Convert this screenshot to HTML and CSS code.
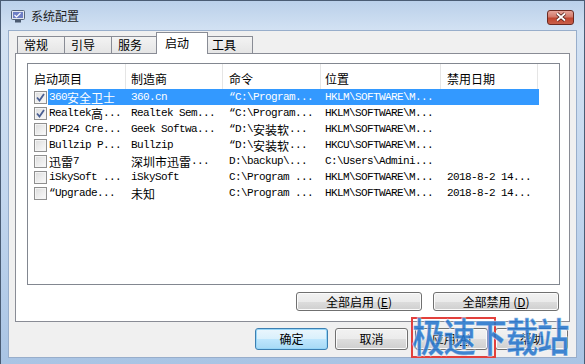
FILE: index.html
```html
<!DOCTYPE html>
<html lang="zh-CN">
<head>
    <meta charset="UTF-8">
    <title>系统配置</title>
    <link rel="stylesheet" href="styles.css">
</head>
<body>

    <div class="window">

        <!-- Title bar -->
        <div class="titlebar">
            <svg class="app-icon" width="14" height="13" viewBox="0 0 14 13">
                <rect x="0.5" y="0.5" width="13" height="9" rx="1" fill="#e3e8f0" stroke="#56667c"/>
                <rect x="2" y="2" width="10" height="6" fill="#6f7fc4"/>
                <path d="M3.5 5 L5.5 7 L9.5 3" stroke="#ffffff" stroke-width="1.2" fill="none"/>
                <rect x="4" y="10" width="6" height="2.5" fill="#4b5a70"/>
            </svg>
            <span class="title">系统配置</span>
            <div class="close-btn">
                <svg width="12" height="10" viewBox="0 0 12 10">
                    <path d="M2 1.5 L10 8.5 M10 1.5 L2 8.5" stroke="#4a1a14" stroke-width="3.4"/>
                    <path d="M2 1.5 L10 8.5 M10 1.5 L2 8.5" stroke="#ffffff" stroke-width="1.8"/>
                </svg>
            </div>
        </div>

        <!-- Dialog client area -->
        <div class="client">
            <div class="tabs">
                <div class="tab">常规</div>
                <div class="tab">引导</div>
                <div class="tab">服务</div>
                <div class="tab active">启动</div>
                <div class="tab">工具</div>
            </div>

            <div class="page">
                <div class="list">
                    <div class="row head">
                        <div class="c c1">启动项目</div>
                        <div class="c c2">制造商</div>
                        <div class="c c3">命令</div>
                        <div class="c c4">位置</div>
                        <div class="c c5">禁用日期</div>
                        <div class="c c6"></div>
                    </div>

                    <div class="row sel">
                        <div class="c c1">
                            <span class="cb on"><svg width="9" height="9" viewBox="0 0 9 9"><path d="M1 4.5 L3.5 7.5 L8 1" stroke="#4a5f93" stroke-width="1.8" fill="none"/></svg></span>
                            <span class="lbl">360<span class="cn">安全卫士</span></span>
                        </div>
                        <div class="c c2">360.cn</div>
                        <div class="c c3">“C:\Program...</div>
                        <div class="c c4">HKLM\SOFTWARE\M...</div>
                        <div class="c c5"></div>
                    </div>

                    <div class="row">
                        <div class="c c1">
                            <span class="cb on"><svg width="9" height="9" viewBox="0 0 9 9"><path d="M1 4.5 L3.5 7.5 L8 1" stroke="#4a5f93" stroke-width="1.8" fill="none"/></svg></span>
                            <span class="lbl">Realtek<span class="cn">高</span>...</span>
                        </div>
                        <div class="c c2">Realtek Sem...</div>
                        <div class="c c3">“C:\Program...</div>
                        <div class="c c4">HKLM\SOFTWARE\M...</div>
                        <div class="c c5"></div>
                    </div>

                    <div class="row">
                        <div class="c c1"><span class="cb"></span><span class="lbl">PDF24 Cre...</span></div>
                        <div class="c c2">Geek Softwa...</div>
                        <div class="c c3">“D:\<span class="cn">安装软</span>...</div>
                        <div class="c c4">HKLM\SOFTWARE\M...</div>
                        <div class="c c5"></div>
                    </div>

                    <div class="row">
                        <div class="c c1"><span class="cb"></span><span class="lbl">Bullzip P...</span></div>
                        <div class="c c2">Bullzip</div>
                        <div class="c c3">“D:\<span class="cn">安装软</span>...</div>
                        <div class="c c4">HKCU\SOFTWARE\M...</div>
                        <div class="c c5"></div>
                    </div>

                    <div class="row">
                        <div class="c c1"><span class="cb"></span><span class="lbl"><span class="cn">迅雷</span>7</span></div>
                        <div class="c c2"><span class="cn">深圳市迅雷</span>...</div>
                        <div class="c c3">D:\backup\...</div>
                        <div class="c c4">C:\Users\Admini...</div>
                        <div class="c c5"></div>
                    </div>

                    <div class="row">
                        <div class="c c1"><span class="cb"></span><span class="lbl">iSkySoft ...</span></div>
                        <div class="c c2">iSkySoft</div>
                        <div class="c c3">C:\Program ...</div>
                        <div class="c c4">HKLM\SOFTWARE\M...</div>
                        <div class="c c5">2018-8-2 14...</div>
                    </div>

                    <div class="row">
                        <div class="c c1"><span class="cb"></span><span class="lbl">“Upgrade...</span></div>
                        <div class="c c2"><span class="cn">未知</span></div>
                        <div class="c c3">C:\Program ...</div>
                        <div class="c c4">HKLM\SOFTWARE\M...</div>
                        <div class="c c5">2018-8-2 14...</div>
                    </div>
                </div>

                <div class="actions">
                    <div class="btn wide">全部启用 (<u>E</u>)</div>
                    <div class="btn wide">全部禁用 (<u>D</u>)</div>
                </div>
            </div>

            <div class="footer">
                <div class="btn default">确定</div>
                <div class="btn">取消</div>
                <div class="btn">应用(<u>A</u>)</div>
                <div class="btn">帮助</div>
            </div>
        </div>

        <!-- Site watermark -->
        <div class="mark-box"></div>
        <div class="watermark">极速下载站</div>
    </div>

</body>
</html>
```

FILE: styles.css
```css
* {
    margin: 0;
    padding: 0;
    box-sizing: border-box;
}

body {
    overflow: hidden;
    font-family: "Noto Sans CJK SC", sans-serif;
    font-size: 12px;
    color: #000;
}

.window {
    position: relative;
    width: 585px;
    height: 364px;
    display: flex;
    flex-direction: column;
    background: linear-gradient(to bottom, #bad0ea 0px, #d3e2f3 30px, #c2d6ee 200px, #a9c4e4 364px);
    border-top: 1px solid #4a5c74;
    border-left: 1px solid #4a5c74;
    border-right: 1px solid #4a5c74;
    overflow: hidden;
}

/* Title bar */
.titlebar {
    height: 29px;
    display: flex;
    align-items: center;
    padding: 0 10px;
}

.app-icon {
    margin-top: 1px;
}

.title {
    margin-left: 6px;
    font-size: 12px;
    line-height: 14px;
    color: #1e1e1e;
}

.close-btn {
    margin-left: auto;
    margin-top: 3px;
    width: 27px;
    height: 15px;
    border: 1px solid #6b2a22;
    border-radius: 3px;
    background: linear-gradient(to bottom, #e6a59a 0%, #d27a6b 45%, #c0452f 55%, #c9604a 100%);
    display: flex;
    align-items: center;
    justify-content: center;
}

/* Client area */
.client {
    flex: 1;
    margin: 0 7px 6px 7px;
    background: #f0f0f0;
    border: 1px solid #98aecb;
    display: flex;
    flex-direction: column;
}

.tabs {
    display: flex;
    align-items: flex-end;
    height: 23px;
    padding-left: 8px;
    margin-bottom: -1px;
}

.tab {
    width: 48px;
    height: 18px;
    margin-right: -1px;
    border: 1px solid #898c95;
    border-bottom: none;
    background: linear-gradient(to bottom, #f3f3f3, #e4e4e4);
    font-size: 12px;
    line-height: 16px;
    padding-left: 6px;
}

.tab.active {
    position: relative;
    z-index: 1;
    width: 52px;
    height: 22px;
    margin-left: -2px;
    margin-right: -3px;
    background: #ffffff;
    padding-left: 8px;
    line-height: 19px;
}

.page {
    margin-left: 6px;
    width: 555px;
    height: 269px;
    background: #ffffff;
    border: 1px solid #898c95;
    padding: 9px 9px 0 11px;
}

/* List view */
.list {
    width: 533px;
    height: 222px;
    border: 1px solid #828790;
    background: #ffffff;
}

.row {
    display: flex;
    height: 16px;
    align-items: center;
    font-family: "Liberation Mono", "Noto Sans CJK SC", monospace;
    font-size: 11px;
    letter-spacing: -0.6px;
    white-space: nowrap;
}

.row .cn {
    font-family: "Noto Sans CJK SC", sans-serif;
    font-size: 12px;
    letter-spacing: 0;
}

.c {
    height: 100%;
    display: flex;
    align-items: center;
    overflow: hidden;
    padding-left: 5px;
}

.c1 { width: 98px; padding-left: 6px; }
.c2 { width: 97px; }
.c3 { width: 98px; padding-left: 6px; }
.c4 { width: 120px; padding-left: 4px; }
.c5 { width: 97px; padding-left: 6px; }
.c6 { flex: 1; }

.row.head {
    height: 25px;
    align-items: stretch;
    font-family: "Noto Sans CJK SC", sans-serif;
    font-size: 12px;
    letter-spacing: 0;
}

.row.head .c {
    border-right: 1px solid #e5e5e5;
    padding-top: 3px;
    height: 25px;
}

.row.head .c6 {
    border-right: none;
}

.cb {
    flex: none;
    width: 13px;
    height: 13px;
    border: 1px solid #8f8f8f;
    background: linear-gradient(135deg, #dcdcdc, #fbfbfb);
    box-shadow: inset 0 0 0 1px #f4f4f4;
    display: flex;
    align-items: center;
    justify-content: center;
    margin-right: 1px;
}

.lbl {
    flex: 1;
    height: 100%;
    display: flex;
    align-items: center;
    padding-left: 1px;
}

.row.sel .lbl,
.row.sel .c2,
.row.sel .c3,
.row.sel .c4,
.row.sel .c5 {
    background: #3399ff;
    color: #ffffff;
}

.row.sel .c5 {
    width: 98px;
}

/* Buttons */
.btn {
    width: 73px;
    height: 22px;
    border: 1px solid #707070;
    border-radius: 3px;
    background: linear-gradient(to bottom, #f2f2f2 0%, #ebebeb 50%, #dddddd 51%, #cfcfcf 100%);
    box-shadow: inset 0 0 0 1px #fbfbfb;
    display: flex;
    align-items: center;
    justify-content: center;
    font-size: 12px;
    line-height: 14px;
}

.btn u {
    text-decoration: underline;
}

.btn.default {
    border-color: #3c7fb1;
    box-shadow: inset 0 0 0 1px #97d6f8;
    background: linear-gradient(to bottom, #eaf6fd 0%, #d9f0fc 50%, #bee6fd 51%, #a7d9f5 100%);
}

.btn.wide {
    width: 126px;
    height: 19px;
}

.actions {
    display: flex;
    justify-content: flex-end;
    gap: 11px;
    margin-top: 7px;
    padding-right: 1px;
}

.footer {
    display: flex;
    justify-content: flex-end;
    gap: 7px;
    padding: 6px 8px 0 0;
}

/* Watermark over the dialog */
.mark-box {
    position: absolute;
    left: 410px;
    top: 316px;
    width: 85px;
    height: 41px;
    border: 2px solid #e2403c;
}

.watermark {
    position: absolute;
    left: 411px;
    top: 309px;
    white-space: nowrap;
    font-family: "Noto Sans CJK SC", sans-serif;
    font-size: 40px;
    font-weight: 700;
    line-height: 50px;
    letter-spacing: -2px;
    color: rgba(38, 118, 205, 0.9);
    transform: scaleX(0.82);
    transform-origin: left top;
    -webkit-text-stroke: 1px rgba(255, 255, 255, 0.5);
}
```
